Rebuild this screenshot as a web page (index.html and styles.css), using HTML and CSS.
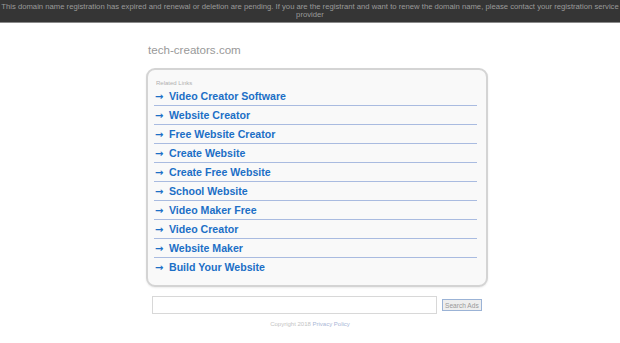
FILE: index.html
```html
<!DOCTYPE html>
<html lang="en">
<head>
    <meta charset="UTF-8">
    <meta name="viewport" content="width=device-width, initial-scale=1.0">
    <title>tech-creators.com</title>
    <link rel="stylesheet" href="styles.css">
</head>
<body>
    <div class="notice">
        <span class="notice-line">This domain name registration has expired and renewal or deletion are pending. If you are the registrant and want to renew the domain name, please contact your registration service</span>
        <span class="notice-line">provider</span>
    </div>

    <div class="page">
        <div class="domain">tech-creators.com</div>

        <div class="links-box">
            <div class="links-title">Related Links</div>
            <ul class="links">
                <li><a href="#"><span class="arrow">&rarr;</span>Video Creator Software</a></li>
                <li><a href="#"><span class="arrow">&rarr;</span>Website Creator</a></li>
                <li><a href="#"><span class="arrow">&rarr;</span>Free Website Creator</a></li>
                <li><a href="#"><span class="arrow">&rarr;</span>Create Website</a></li>
                <li><a href="#"><span class="arrow">&rarr;</span>Create Free Website</a></li>
                <li><a href="#"><span class="arrow">&rarr;</span>School Website</a></li>
                <li><a href="#"><span class="arrow">&rarr;</span>Video Maker Free</a></li>
                <li><a href="#"><span class="arrow">&rarr;</span>Video Creator</a></li>
                <li><a href="#"><span class="arrow">&rarr;</span>Website Maker</a></li>
                <li><a href="#"><span class="arrow">&rarr;</span>Build Your Website</a></li>
            </ul>
        </div>

        <form class="search">
            <input type="text" class="search-input">
            <button type="button" class="search-btn">Search Ads</button>
        </form>
    </div>

    <div class="footer">Copyright 2018 <a href="#">Privacy Policy</a></div>
</body>
</html>
```

FILE: styles.css
```css
body {
    margin: 0;
    font-family: "Liberation Sans", Arial, sans-serif;
    background-color: #fff;
}
.notice {
    background-color: #353535;
    border-bottom: 1px solid #8a8a8a;
    color: #9a9a9a;
    font-size: 7.7px;
    line-height: 8px;
    text-align: center;
    padding: 3px 0;
    height: 16px;
    overflow: hidden;
}
.notice-line {
    display: block;
    white-space: nowrap;
}
.page {
    width: 342px;
    margin-left: 146px;
}
.domain {
    color: #999;
    font-size: 11.6px;
    padding: 20px 0 0 2px;
    height: 25px;
}
.links-box {
    background-color: #f9f9f9;
    border: 2px solid #d4d4d4;
    border-radius: 9px;
    padding: 9px 9px 9px 6px;
    box-shadow: 0 1px 2px rgba(0,0,0,0.08);
}
.links-title {
    color: #b0b0b0;
    font-size: 6px;
    line-height: 8px;
    padding-left: 2px;
}
.links {
    list-style: none;
    margin: 0;
    padding: 0;
}
.links li {
    height: 18px;
    border-bottom: 1px solid #a9bbe0;
}
.links li:last-child {
    border-bottom: none;
}
.links a {
    display: flex;
    align-items: center;
    height: 18px;
    color: #1c6fc6;
    font-size: 10.6px;
    font-weight: bold;
    text-decoration: none;
}
.arrow {
    font-family: "DejaVu Sans", sans-serif;
    font-size: 10px;
    width: 14px;
    padding-left: 1px;
}
.search {
    display: flex;
    align-items: center;
    margin: 9px 0 0 6px;
}
.search-input {
    width: 285px;
    height: 18px;
    box-sizing: border-box;
    border: 1px solid #d8d8d8;
    margin: 0;
}
.search-btn {
    margin-left: 5px;
    height: 12px;
    padding: 0 2px;
    font-family: "Liberation Sans", Arial, sans-serif;
    font-size: 6.6px;
    color: #999;
    background-color: #eee;
    border: 1px solid #9bb3d6;
}
.footer {
    text-align: center;
    font-size: 6px;
    color: #c4c4c4;
    padding-top: 7px;
}
.footer a {
    color: #a9b6d6;
}
```
